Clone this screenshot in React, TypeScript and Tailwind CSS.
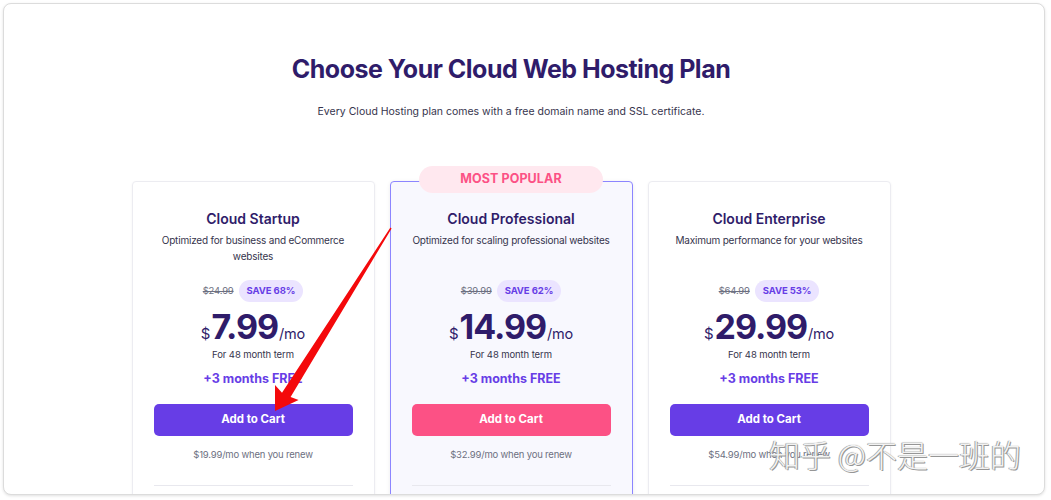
import React from "react";

type Plan = {
  name: string;
  desc: React.ReactNode;
  old: string;
  save: string;
  price: string;
  renew: string;
  popular?: boolean;
};

const plans: Plan[] = [
  {
    name: "Cloud Startup",
    desc: (
      <>
        Optimized for business and eCommerce
        <br />
        websites
      </>
    ),
    old: "$24.99",
    save: "SAVE 68%",
    price: "7.99",
    renew: "$19.99/mo when you renew",
  },
  {
    name: "Cloud Professional",
    desc: "Optimized for scaling professional websites",
    old: "$39.99",
    save: "SAVE 62%",
    price: "14.99",
    renew: "$32.99/mo when you renew",
    popular: true,
  },
  {
    name: "Cloud Enterprise",
    desc: "Maximum performance for your websites",
    old: "$64.99",
    save: "SAVE 53%",
    price: "29.99",
    renew: "$54.99/mo when you renew",
  },
];

function Card({ p }: { p: Plan }) {
  return (
    <div
      className={
        "relative flex w-[243px] shrink-0 flex-col items-center rounded-[4px] px-[21px] pt-[27px] " +
        (p.popular
          ? "border-[1.5px] border-[#8c85ff] bg-[#f8f8fe] shadow-[0_1px_4px_rgba(29,30,32,0.08)]"
          : "border border-[#ececf1] bg-white shadow-[0_1px_3px_rgba(29,30,32,0.05)]")
      }
    >
      {p.popular && (
        <div className="absolute left-1/2 top-[-16px] flex h-[27px] w-[184px] -translate-x-1/2 items-center justify-center rounded-full bg-[#ffe8ef] text-[12.5px] font-bold tracking-[0.1px] text-[#fc5185]">
          MOST POPULAR
        </div>
      )}
      <div className="text-[14px] font-semibold leading-[20px] text-[#2f1c6a]">{p.name}</div>
      <div className="mt-[3px] h-[36px] w-[201px] whitespace-nowrap text-center text-[10px] leading-[16px] tracking-[-0.2px] text-[#36344d]">
        {p.desc}
      </div>
      <div className="mt-[12px] flex h-[22px] items-center gap-[5px]">
        <span className="text-[9.5px] tracking-[-0.2px] text-[#6d7081] line-through">{p.old}</span>
        <span className="flex h-[22px] items-center rounded-full bg-[#ebe4ff] px-[8px] text-[9.5px] font-bold tracking-[-0.1px] text-[#673de6]">
          {p.save}
        </span>
      </div>
      <div className="mt-[6px] flex h-[38px] items-baseline text-[#2f1c6a]">
        <span className="mr-[1px] text-[15px] leading-none">$</span>
        <span className="text-[34px] font-bold leading-[38px] tracking-[-1px]">{p.price}</span>
        <span className="ml-[1px] text-[14.5px] leading-none tracking-[-0.2px]">/mo</span>
      </div>
      <div className="mt-[2px] text-[9.5px] leading-[14px] tracking-[-0.1px] text-[#36344d]">For 48 month term</div>
      <div className="mt-[8px] text-[12.5px] font-bold leading-[18px] text-[#673de6]">+3 months FREE</div>
      <button
        className={
          "mt-[16px] flex h-[32px] w-full items-center justify-center rounded-[5px] text-[11.5px] font-bold text-white " +
          (p.popular ? "bg-[#fc5185]" : "bg-[#673de6]")
        }
      >
        Add to Cart
      </button>
      <div className="mt-[12px] text-[9.5px] leading-[14px] tracking-[-0.2px] text-[#6d7081]">{p.renew}</div>
      <div className="mt-[23px] h-px w-full bg-[#e8e8ee]" />
      <div className="h-[40px]" />
    </div>
  );
}

export default function App() {
  return (
    <div
      className="relative h-[500px] w-[1051px] overflow-hidden bg-white"
      style={{ fontFamily: "Inter, 'Noto Sans', 'Noto Sans CJK SC', sans-serif" }}
    >
      <div className="ml-[3px] mt-[3px] h-[492px] w-[1042px] overflow-hidden rounded-[8px] border border-[#dcdcdc] bg-white shadow-[0_1px_3px_rgba(0,0,0,0.12)]">
        <div className="flex flex-col items-center pr-[26px] pt-[49px]">
          <h1 className="text-[25px] font-bold leading-[32px] tracking-[-0.5px] text-[#2f1c6a]">
            Choose Your Cloud Web Hosting Plan
          </h1>
          <p className="mt-[19px] text-[10.5px] leading-[16px] text-[#36344d]">
            Every Cloud Hosting plan comes with a free domain name and SSL certificate.
          </p>
          <div className="mt-[61px] flex gap-[15px]">
            {plans.map((p) => (
              <Card key={p.name} p={p} />
            ))}
          </div>
        </div>
      </div>

      <svg className="pointer-events-none absolute left-0 top-0" width="1051" height="500">
        <polygon
          points="391.6,228.4 290.6,397.0 298.6,399.9 275,411 275.0,384.9 282.0,392.8 390.4,227.6"
          fill="#f4090b"
        />
      </svg>

      <div
        className="pointer-events-none absolute left-[769px] top-[433px] whitespace-nowrap text-[31px] font-light leading-[42px] text-white/90"
        style={{
          fontFamily: "'Noto Sans CJK SC', 'Noto Sans', sans-serif",
          textShadow: "0 0 1px #7a7a7a, 1px 1px 0 #9a9a9a, -1px 0 0 #b5b5b5",
        }}
      >
        知乎 @不是一班的
      </div>
    </div>
  );
}
